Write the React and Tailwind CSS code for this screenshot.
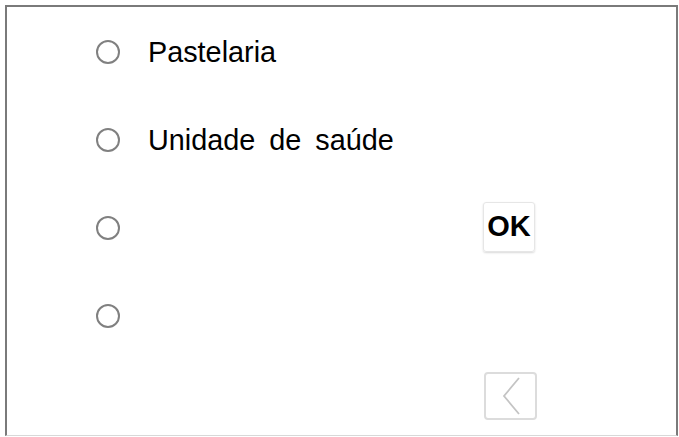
export default function App() {
  const rows = [
    { label: "Pastelaria" },
    { label: "Unidade de saúde", spaced: true },
    { label: "", ok: true },
    { label: "" },
  ];
  return (
    <div className="w-[679px] h-[437px] bg-white pt-[5px] pl-[5px] overflow-hidden" style={{ fontFamily: '"Liberation Sans", Arial, sans-serif' }}>
      <div className="w-[673px] h-[431px] border-l-2 border-t-2 border-r-2 border-b border-l-[#7a7a7a] border-t-[#7a7a7a] border-r-[#7a7a7a] border-b-[#d8d8d8] flex flex-col pt-[1px]">
        {rows.map((r, i) => (
          <div key={i} className="h-[88px] flex items-center">
            <div className="w-[476px] flex items-center pl-[89px]">
              <div className="w-[24px] h-[24px] rounded-full border-2 border-[#808080] shrink-0" />
              <span className={"ml-[28px] text-[28.8px] text-black leading-none " + (r.spaced ? "[word-spacing:6px]" : "")}>{r.label}</span>
            </div>
            {r.ok && (
              <div className="w-[52px] h-[50px] -mt-[3px] rounded-[3px] border border-[#e6e6e6] shadow-[0_1px_2px_rgba(0,0,0,0.15)] flex items-center justify-center text-[29px] font-bold text-black">
                OK
              </div>
            )}
          </div>
        ))}
        <div className="flex-1 flex items-start pt-[12px]">
          <div className="ml-[477px] w-[53px] h-[48px] rounded-[4px] border-2 border-[#dcdcdc] flex items-center justify-center">
            <svg width="24" height="40" viewBox="0 0 24 40" fill="none">
              <path d="M20 2 L5 20 L20 38" stroke="#c4c4c4" strokeWidth="1.8" />
            </svg>
          </div>
        </div>
      </div>
    </div>
  );
}
